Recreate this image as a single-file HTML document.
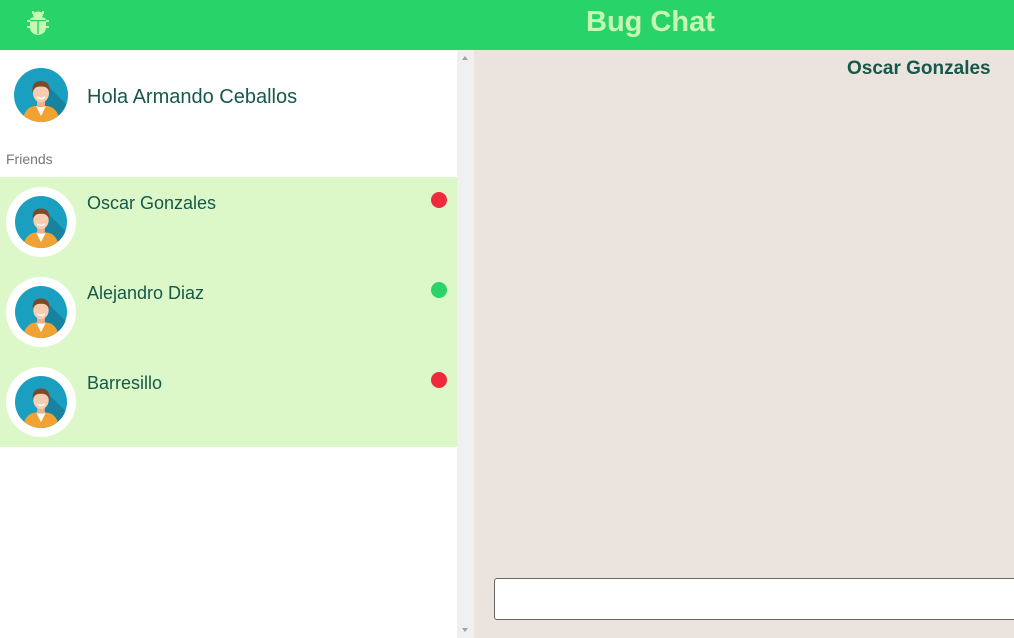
<!DOCTYPE html><html><head><style>
body{margin:0;width:1014px;height:638px;overflow:hidden;font-family:"Liberation Sans",sans-serif;background:#fff;position:relative}
.hdr{position:absolute;left:0;top:0;width:1014px;height:50px;background:#28d46a}
.hdr .t{position:absolute;left:586px;top:6px;font-size:29px;font-weight:bold;color:#c8f7b2}
.left{position:absolute;left:0;top:50px;width:457px;height:588px;background:#fff}
.sb{position:absolute;left:457px;top:50px;width:17px;height:588px;background:#f0f0f0}
.right{position:absolute;left:474px;top:50px;width:540px;height:588px;background:#ebe3de}
.name{position:absolute;color:#17584a}
.row{position:absolute;left:0;width:457px;height:90px;background:#dcf8c8}
.ring{position:absolute;left:6px;top:10px;width:70px;height:70px;border-radius:50%;background:#fff}
.dot{position:absolute;left:431px;top:15px;width:16px;height:16px;border-radius:50%}
</style></head><body>
<svg width="0" height="0" style="position:absolute"><defs>
<symbol id="av" viewBox="0 0 54 54">
<clipPath id="c"><circle cx="27" cy="27" r="27"/></clipPath>
<g clip-path="url(#c)">
<rect width="54" height="54" fill="#1a9fc0"/>
<polygon points="30,14 60,44 60,60 30,60" fill="#17839f"/>
<path d="M8 54 Q10 40 20 38 L34 38 Q44 40 46 54Z" fill="#f0a232"/>
<polygon points="22,38 32,38 27,48" fill="#fff"/>
<rect x="23" y="32" width="8" height="7" fill="#e9b38f"/>
<ellipse cx="27" cy="25" rx="8" ry="9.5" fill="#f6cdb0"/>
<path d="M18.5 25 Q17 13 27 13 Q37 13 35.5 25 Q34 18 27 18.5 Q20 18 18.5 25Z" fill="#7a4a2a"/>
<path d="M23 29 Q27 32 31 29" stroke="#fff" stroke-width="1.5" fill="none"/>
</g></symbol></defs></svg>
<div class="hdr">
<svg style="position:absolute;left:27px;top:10px" width="22" height="26" viewBox="0 0 22 26"><g fill="#c8f7b2"><ellipse cx="11" cy="5" rx="5" ry="3.5"/><path d="M3 10 Q3 7 11 7 Q19 7 19 10 L19 17 Q19 24 11 25 Q3 24 3 17Z"/><rect x="0" y="10" width="3" height="2"/><rect x="19" y="10" width="3" height="2"/><rect x="0" y="16" width="3" height="2"/><rect x="19" y="16" width="3" height="2"/><rect x="5" y="1" width="2" height="3"/><rect x="15" y="1" width="2" height="3"/></g><rect x="10.3" y="11" width="1.4" height="13" fill="#28d46a"/><rect x="3" y="10" width="16" height="1.3" fill="#28d46a"/></svg>
<div class="t">Bug Chat</div></div>
<div class="left">
<svg style="position:absolute;left:14px;top:18px" width="54" height="54"><use href="#av"/></svg>
<div class="name" style="left:87px;top:36px;font-size:20px">Hola Armando Ceballos</div>
<div style="position:absolute;left:6px;top:101px;font-size:14px;color:#777">Friends</div>
<div class="row" style="top:127px"><div class="ring"><svg style="position:absolute;left:9px;top:9px" width="52" height="52"><use href="#av"/></svg></div><div class="name" style="left:87px;top:16px;font-size:18px">Oscar Gonzales</div><div class="dot" style="background:#ee2a3c"></div></div>
<div class="row" style="top:217px"><div class="ring"><svg style="position:absolute;left:9px;top:9px" width="52" height="52"><use href="#av"/></svg></div><div class="name" style="left:87px;top:16px;font-size:18px">Alejandro Diaz</div><div class="dot" style="background:#2ad466"></div></div>
<div class="row" style="top:307px"><div class="ring"><svg style="position:absolute;left:9px;top:9px" width="52" height="52"><use href="#av"/></svg></div><div class="name" style="left:87px;top:16px;font-size:18px">Barresillo</div><div class="dot" style="background:#ee2a3c"></div></div>
</div>
<div class="sb"><div style="position:absolute;left:5px;top:6px;border:3px solid transparent;border-bottom:4px solid #a3a3a3;border-top:0"></div><div style="position:absolute;left:5px;top:578px;border:3px solid transparent;border-top:4px solid #a3a3a3;border-bottom:0"></div></div>
<div class="right">
<div class="name" style="left:373px;top:8px;font-size:19px;font-weight:bold">Oscar Gonzales</div>
<div style="position:absolute;left:20px;top:528px;width:540px;height:40px;background:#fff;border:1px solid #666;border-radius:3px"></div>
</div>
</body></html>
